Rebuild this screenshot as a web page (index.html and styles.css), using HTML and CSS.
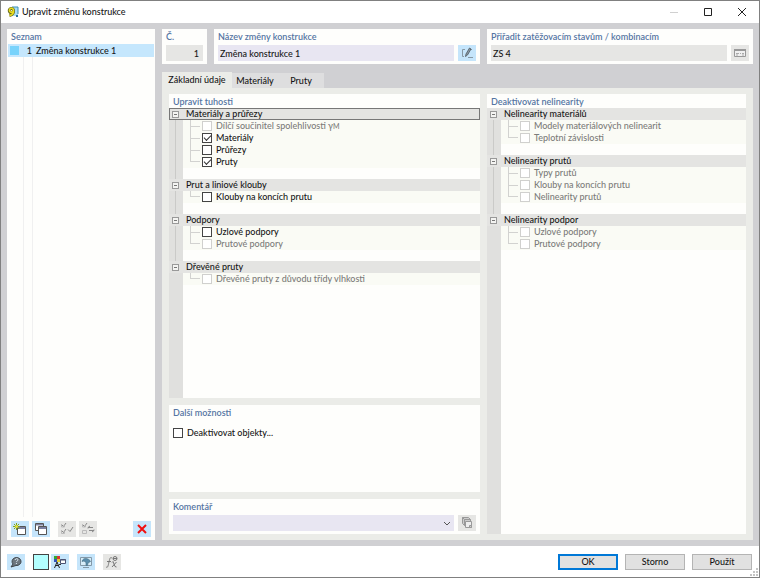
FILE: index.html
```html
<!DOCTYPE html>
<html lang="cs">
<head>
<meta charset="utf-8">
<title>Upravit změnu konstrukce</title>
<link rel="stylesheet" href="styles.css">
</head>
<body>
<div class="window">
  <header class="titlebar">
    <svg class="app-icon" width="12" height="12" viewBox="0 0 12 12" aria-hidden="true">
      <path d="M5 1h6v9H5z" fill="#a8dcf5"/><path d="M5 1h6v7" fill="none" stroke="#3d8fb5"/>
      <path d="M9 9h2v2H9z" fill="#276b9b"/>
      <path d="M6.500 5.500A2.200 2.200 0 1 1 6.300 3.500C7 6 6 9 2.500 9.500" fill="none" stroke="#67691a" stroke-width="3"/>
      <path d="M6.300 5A2 2 0 1 1 6.300 3.500C7 6 6 9 2.500 9.500" fill="none" stroke="#e8dc22" stroke-width="1.600"/>
    </svg>
    <h1 class="title">Upravit změnu konstrukce</h1>
    <div class="window-buttons">
      <button class="window-button" aria-label="Minimalizovat" disabled><svg width="10" height="10" viewBox="0 0 10 10"><path d="M1 5.500h8" stroke="#d0d0d0"/></svg></button>
      <button class="window-button" aria-label="Maximalizovat"><svg width="10" height="10" viewBox="0 0 10 10"><path d="M1.500 1.500h7v7h-7z" fill="none" stroke="#222"/></svg></button>
      <button class="window-button" aria-label="Zavřít"><svg width="10" height="10" viewBox="0 0 10 10"><path d="M1 1l8 8M9 1L1 9" stroke="#222"/></svg></button>
    </div>
  </header>

  <main class="body">
    <section class="panel list-panel">
      <h2 class="heading">Seznam</h2>
      <ul class="list">
        <li class="list-row"><span class="list-color"></span><span class="list-number">1</span><span>Změna konstrukce 1</span></li>
      </ul>
      <div class="list-tools">
        <button class="tool" aria-label="Nový"><svg width="16" height="14" viewBox="0 0 16 14"><path d="M5.500 4.500h8v8h-8z" fill="#fff" stroke="#555"/><path d="M6 5h7v2H6z" fill="#7a80a0"/><path d="M4.500 1v7M1 4.500h7M2 2l5 5M7 2L2 7" stroke="#82a61e"/><circle cx="4.500" cy="4.500" r="1.500" fill="#e4df42"/></svg></button>
        <button class="tool" aria-label="Kopírovat"><svg width="16" height="14" viewBox="0 0 16 14"><path d="M2.500 1.500h8v7h-8z" fill="#fff" stroke="#555"/><path d="M3 2h7v1.500H3z" fill="#7a80a0"/><path d="M5.500 4.500h8v8h-8z" fill="#fff" stroke="#555"/><path d="M6 5h7v2H6z" fill="#7a80a0"/></svg></button>
        <button class="tool tool-off tool-gap" aria-label="Vybrat vše" disabled><svg width="16" height="14" viewBox="0 0 16 14" fill="none" stroke="#888"><path d="M3 3l1.500 1.500L7 1M3 9l1.500 1.500L7 7M9 7.500l2 2L14 5"/><path d="M2.500 2v3h3V3.500M2.500 8v3.500h3V9.500" stroke="#bbb"/></svg></button>
        <button class="tool tool-off" aria-label="Obrátit výběr" disabled><svg width="16" height="14" viewBox="0 0 16 14" fill="none" stroke="#888"><path d="M3 3l1.500 1.500L7 1M8 6.500V5.500h5M14 7.500v1H9M10 4L8 5.500M12 10l2-1.500"/><path d="M2.500 2v3h3V3.500M2.500 8.500h4v3h-4z" stroke="#bbb"/></svg></button>
        <button class="tool tool-end" aria-label="Smazat"><svg width="16" height="14" viewBox="0 0 16 14"><path d="M4 3l8 8M12 3l-8 8" stroke="#f01010" stroke-width="2"/></svg></button>
      </div>
    </section>

    <div class="details">
      <div class="fields">
        <section class="panel field number-field">
          <label class="heading" for="number">Č.</label>
          <input class="input input-off input-number" id="number" value="1" readonly>
        </section>
        <section class="panel field name-field">
          <label class="heading" for="name">Název změny konstrukce</label>
          <div class="field-row">
            <input class="input" id="name" value="Změna konstrukce 1">
            <button class="tool" aria-label="Upravit název"><svg width="16" height="14" viewBox="0 0 16 14" fill="none" stroke="#66737d"><path d="M6 3.500H3.500v7H5M9 11.500h5M11 3.500h2" stroke="#8798a4"/><path d="M6.500 10.500l.5-2.500 3.500-6 1.500 1-3.500 6z" fill="#899ba8" stroke="#4c555c" stroke-width=".8"/></svg></button>
          </div>
        </section>
        <section class="panel field assign-field">
          <label class="heading" for="assign">Přiřadit zatěžovacím stavům / kombinacím</label>
          <div class="field-row">
            <input class="input input-off" id="assign" value="ZS 4" readonly>
            <button class="tool tool-off" aria-label="Vybrat stavy" disabled><svg width="16" height="14" viewBox="0 0 16 14" fill="none" stroke="#999"><path d="M2.500 3.500h11v7h-11z" fill="#f0f0f0"/><path d="M2 4h12" stroke-width="2"/><path d="M4 7.500h3M8 7.500h1M10 7.500h2M4 9h2M10 9h2" stroke="#aaa"/></svg></button>
          </div>
        </section>
      </div>

      <div class="tabs" role="tablist">
        <button class="tab tab-active" role="tab" aria-selected="true">Základní údaje</button>
        <button class="tab" role="tab">Materiály</button>
        <button class="tab" role="tab">Pruty</button>
      </div>

      <div class="tab-page" role="tabpanel">
        <div class="column">
          <section class="panel tree-panel">
            <h2 class="heading">Upravit tuhosti</h2>
            <div class="tree">
              <div class="group">
                <h3 class="group-title group-focused"><button class="toggle" aria-label="Sbalit"></button>Materiály a průřezy</h3>
                <label class="item item-off"><input class="check" type="checkbox" disabled><span>Dílčí součinitel spolehlivosti γ<small class="subscript">M</small></span></label>
                <label class="item"><input class="check" type="checkbox" checked>Materiály</label>
                <label class="item"><input class="check" type="checkbox">Průřezy</label>
                <label class="item"><input class="check" type="checkbox" checked>Pruty</label>
              </div>
              <div class="group">
                <h3 class="group-title"><button class="toggle" aria-label="Sbalit"></button>Prut a liniové klouby</h3>
                <label class="item"><input class="check" type="checkbox">Klouby na koncích prutu</label>
              </div>
              <div class="group">
                <h3 class="group-title"><button class="toggle" aria-label="Sbalit"></button>Podpory</h3>
                <label class="item"><input class="check" type="checkbox">Uzlové podpory</label>
                <label class="item item-off"><input class="check" type="checkbox" disabled>Prutové podpory</label>
              </div>
              <div class="group">
                <h3 class="group-title"><button class="toggle" aria-label="Sbalit"></button>Dřevěné pruty</h3>
                <label class="item item-off"><input class="check" type="checkbox" disabled>Dřevěné pruty z důvodu třídy vlhkosti</label>
              </div>
            </div>
          </section>
          <section class="panel options-panel">
            <h2 class="heading">Další možnosti</h2>
            <label class="option"><input class="check" type="checkbox">Deaktivovat objekty...</label>
          </section>
          <section class="panel field">
            <label class="heading" for="comment">Komentář</label>
            <div class="field-row">
              <div class="combo">
                <select class="input select" id="comment"><option></option></select>
                <svg class="chevron" width="8" height="6" viewBox="0 0 8 6"><path d="M1 1l3 3 3-3" fill="none" stroke="#555"/></svg>
              </div>
              <button class="tool tool-off" aria-label="Komentáře" disabled><svg width="16" height="14" viewBox="0 0 16 14" fill="#ccc" stroke="#999"><path d="M3.500 1.500h6l2 2v6h-6l-2-2z"/><path d="M3.500 1.500l2 2v6M5.500 3.500h6" fill="none"/><path d="M6.500 5.500h6v6h-6z" fill="#eee"/><path d="M10.500 9.500h2v2h-2z"/></svg></button>
            </div>
          </section>
        </div>

        <section class="panel tree-panel column-right">
          <h2 class="heading">Deaktivovat nelinearity</h2>
          <div class="tree">
            <div class="group">
              <h3 class="group-title"><button class="toggle" aria-label="Sbalit"></button>Nelinearity materiálů</h3>
              <label class="item item-off"><input class="check" type="checkbox" disabled>Modely materiálových nelinearit</label>
              <label class="item item-off"><input class="check" type="checkbox" disabled>Teplotní závislosti</label>
            </div>
            <div class="group">
              <h3 class="group-title"><button class="toggle" aria-label="Sbalit"></button>Nelinearity prutů</h3>
              <label class="item item-off"><input class="check" type="checkbox" disabled>Typy prutů</label>
              <label class="item item-off"><input class="check" type="checkbox" disabled>Klouby na koncích prutu</label>
              <label class="item item-off"><input class="check" type="checkbox" disabled>Nelinearity prutů</label>
            </div>
            <div class="group">
              <h3 class="group-title"><button class="toggle" aria-label="Sbalit"></button>Nelinearity podpor</h3>
              <label class="item item-off"><input class="check" type="checkbox" disabled>Uzlové podpory</label>
              <label class="item item-off"><input class="check" type="checkbox" disabled>Prutové podpory</label>
            </div>
          </div>
        </section>
      </div>
    </div>
  </main>

  <footer class="footer">
    <div class="footer-tools">
      <button class="tool" aria-label="Nápověda"><svg width="16" height="14" viewBox="0 0 16 14"><path d="M3 12l2-3A4.500 4 0 1 1 8 10.500z" fill="#6d7780" stroke="#3f464c"/><path d="M7 5c.5-2 3.500-1.500 3 0-.3 1-1.500 1-1.500 2M8.400 8v1" fill="none" stroke="#dbe9f2"/></svg></button>
      <button class="swatch" aria-label="Barva"></button>
      <button class="tool" aria-label="Zobrazení"><svg width="16" height="14" viewBox="0 0 16 14"><path d="M2 1h3v3H2z" fill="#3a3"/><path d="M5 1h3v3H5z" fill="#d33"/><path d="M2 4h3v3H2z" fill="#35b"/><path d="M5 4h3v3H5z" fill="#dc3"/><path d="M2.500 13L5 7l2.500 6M4 10.500h3" fill="none" stroke="#222"/><path d="M8.500 4.500h5v4h-5z" fill="#fff" stroke="#4b5273"/><path d="M8 5h6" stroke="#4b5273"/><path d="M7 9.500h2" stroke="#333"/></svg></button>
      <button class="tool tool-gap" aria-label="Obrazovka"><svg width="16" height="14" viewBox="0 0 16 14"><path d="M2.500 2.500h11v8h-11z" fill="#d7edf9" stroke="#8499a8"/><path d="M5 12.500h6" stroke="#8499a8"/><path d="M4 6.500C4.500 4 6.500 3 8.500 3.500S12 5 12.500 6.500L10 8l-.5 2.500H8V7.500L6 6z" fill="#5a8dac" stroke="#467087" stroke-width=".6"/></svg></button>
      <button class="tool tool-off tool-gap" aria-label="Vzorec" disabled><svg width="16" height="14" viewBox="0 0 16 14" fill="none" stroke="#777"><path d="M2 12c2 1 2-1 3-5s1-5 3-4M3 6.500h4M8 7.500l1-1 2 5 1.500.500M12.500 7l-4.500 5"/><circle cx="11" cy="3.500" r="2"/><path d="M9 3.500h4"/></svg></button>
    </div>
    <div class="actions">
      <button class="action action-default">OK</button>
      <button class="action">Storno</button>
      <button class="action">Použít</button>
    </div>
    <svg class="grip" width="8" height="8" viewBox="0 0 8 8" fill="#c4c4c4"><path d="M6 0h2v2H6zM3 3h2v2H3zM6 3h2v2H6zM0 6h2v2H0zM3 6h2v2H3zM6 6h2v2H6z"/></svg>
  </footer>
</div>
</body>
</html>
```
FILE: styles.css
```css
* { box-sizing: border-box; }

body,
button,
input,
select {
  margin: 0;
  font-family: Lato, "Open Sans", sans-serif;
  font-size: 9px;
  font-weight: 500;
  line-height: 12px;
  color: #161616;
}

h1, h2, h3, ul { margin: 0; padding: 0; font-size: inherit; font-weight: 500; list-style: none; }
button { padding: 0; border: 0; background: none; }
svg { display: block; }

.window {
  display: flex;
  flex-direction: column;
  min-height: 100vh;
  border: 1px solid #808080;
  background: #fff;
}

.titlebar { display: flex; align-items: center; height: 22px; padding-left: 6px; }
.title { flex: 1; margin-left: 3px; }
.window-buttons { display: flex; }
.window-button { display: grid; place-items: center; width: 34px; height: 22px; }

.body {
  display: flex;
  flex: 1;
  gap: 7px;
  padding: 6px;
  background: #d0d0d3;
}

.panel { display: flex; flex-direction: column; background: #fefefc; }
.heading { height: 14px; padding: 2px 4px 0; font-weight: 600; color: #5575a3; }

.list-panel { flex: 1 1 148px; }
.list {
  flex: 1;
  margin: 1px 1px 0;
  background: linear-gradient(90deg, transparent 15px, #f0f0f0 15px 16px, transparent 16px 24px, #f0f0f0 24px 25px, transparent 25px);
}
.list-row { display: flex; align-items: center; height: 13px; background: #c5e7fd; }
.list-color { width: 9px; height: 9px; margin-left: 2px; background: #78d3fb; }
.list-number { width: 13px; margin-right: 4px; text-align: right; }
.list-tools { display: flex; gap: 3px; padding: 4px 4px 3px; }

.tool {
  display: grid;
  place-items: center;
  flex: none;
  width: 18px;
  height: 16px;
  background: #c5e5fb;
}
.tool-off { background: #e6e6e4; }
.tool-gap { margin-left: 5px; }
.tool-end { margin-left: auto; }

.details { display: flex; flex: 4 1 591px; flex-direction: column; }
.fields { display: flex; gap: 7px; margin-bottom: 8px; }
.field { padding-bottom: 3px; }
.field .heading { height: 16px; }
.number-field { width: 45px; }
.name-field, .assign-field { flex: 1; }
.field-row { display: flex; gap: 4px; padding: 0 4px; }
.input {
  flex: 1;
  width: 100%;
  min-width: 0;
  height: 16px;
  padding: 0 2px;
  border: 0;
  border-radius: 0;
  background: #e8e6f2;
}
.input-off { background: #e6e6e4; }
.input-number { flex: none; align-self: center; width: 37px; padding-right: 4px; text-align: right; }

.tabs { display: flex; align-items: flex-end; }
.tab { height: 15px; padding: 0 4px; background: #dededf; min-width: 46px; }
.tab-active { height: 16px; min-width: 70px; background: #ebece8; }

.tab-page { display: flex; flex: 1; gap: 7px; padding: 6px 7px; background: #ebece8; }
.column { display: flex; flex: 6; flex-direction: column; gap: 7px; min-width: 0; }
.column-right { flex: 5; }
.tree-panel { min-width: 0; }
.column .tree-panel { flex: 1; }
.tree {
  flex: 1;
  background: linear-gradient(90deg, #e0e0de 14px, transparent 14px);
}
.group {
  padding-bottom: 11px;
  background: linear-gradient(90deg, transparent 6px, #cacac8 6px 7px, transparent 7px);
}
.group:last-child { padding-bottom: 0; background: none; }
.group-title { display: flex; align-items: center; height: 12px; background: #e4e4e2; }
.group-focused { outline: 1px solid #777; outline-offset: -1px; }
.toggle {
  flex: none;
  width: 7px;
  height: 7px;
  margin: 0 7px 0 3px;
  border: 1px solid #999;
  background: linear-gradient(#777, #777) center / 3px 1px no-repeat #f4f4f2;
}
.item {
  display: flex;
  align-items: center;
  height: 12px;
  margin-left: 14px;
  padding-left: 7px;
  background: #fafbf5;
}
.item::before {
  content: "";
  align-self: stretch;
  width: 9px;
  margin-right: 2px;
  border-left: 1px solid #d2d2d0;
  background: linear-gradient(#d2d2d0, #d2d2d0) center / 100% 1px no-repeat;
}
.item:last-child::before { align-self: flex-start; height: 6px; background-position: bottom; }
.item-off { color: #7c7c7a; }
.subscript { font-size: 7px; }

.check {
  appearance: none;
  display: grid;
  place-items: center;
  flex: none;
  width: 10px;
  height: 10px;
  margin: 0 4px 0 0;
  border: 1px solid #444;
  background: #fff;
}
.check:disabled { border-color: #d0d0ce; }
.check:checked::before {
  content: "";
  width: 6px;
  height: 3px;
  margin-bottom: 2px;
  border: solid #333;
  border-width: 0 0 1px 1px;
  transform: rotate(-45deg);
}

.options-panel { min-height: 87px; }
.option { display: flex; align-items: center; padding: 8px 4px; }

.combo { position: relative; display: flex; flex: 1; }
.select { appearance: none; }
.chevron { position: absolute; top: 6px; right: 3px; pointer-events: none; }

.footer { position: relative; display: flex; align-items: center; height: 31px; padding: 0 7px 0 6px; }
.footer-tools { display: flex; align-items: center; gap: 2px; }
.swatch { width: 16px; height: 16px; margin-left: 6px; border: 1px solid #444; background: #b3ffff; }
.footer-tools .tool-gap { margin-left: 6px; }
.actions { display: flex; gap: 7px; margin-left: auto; }
.action { width: 60px; height: 16px; border: 1px solid #b4b4b4; background: #e1e1e1; }
.action-default { border: 1px solid #0078d7; outline: 1px solid #0078d7; outline-offset: -2px; }
.grip { position: absolute; right: 1px; bottom: 1px; }
```
